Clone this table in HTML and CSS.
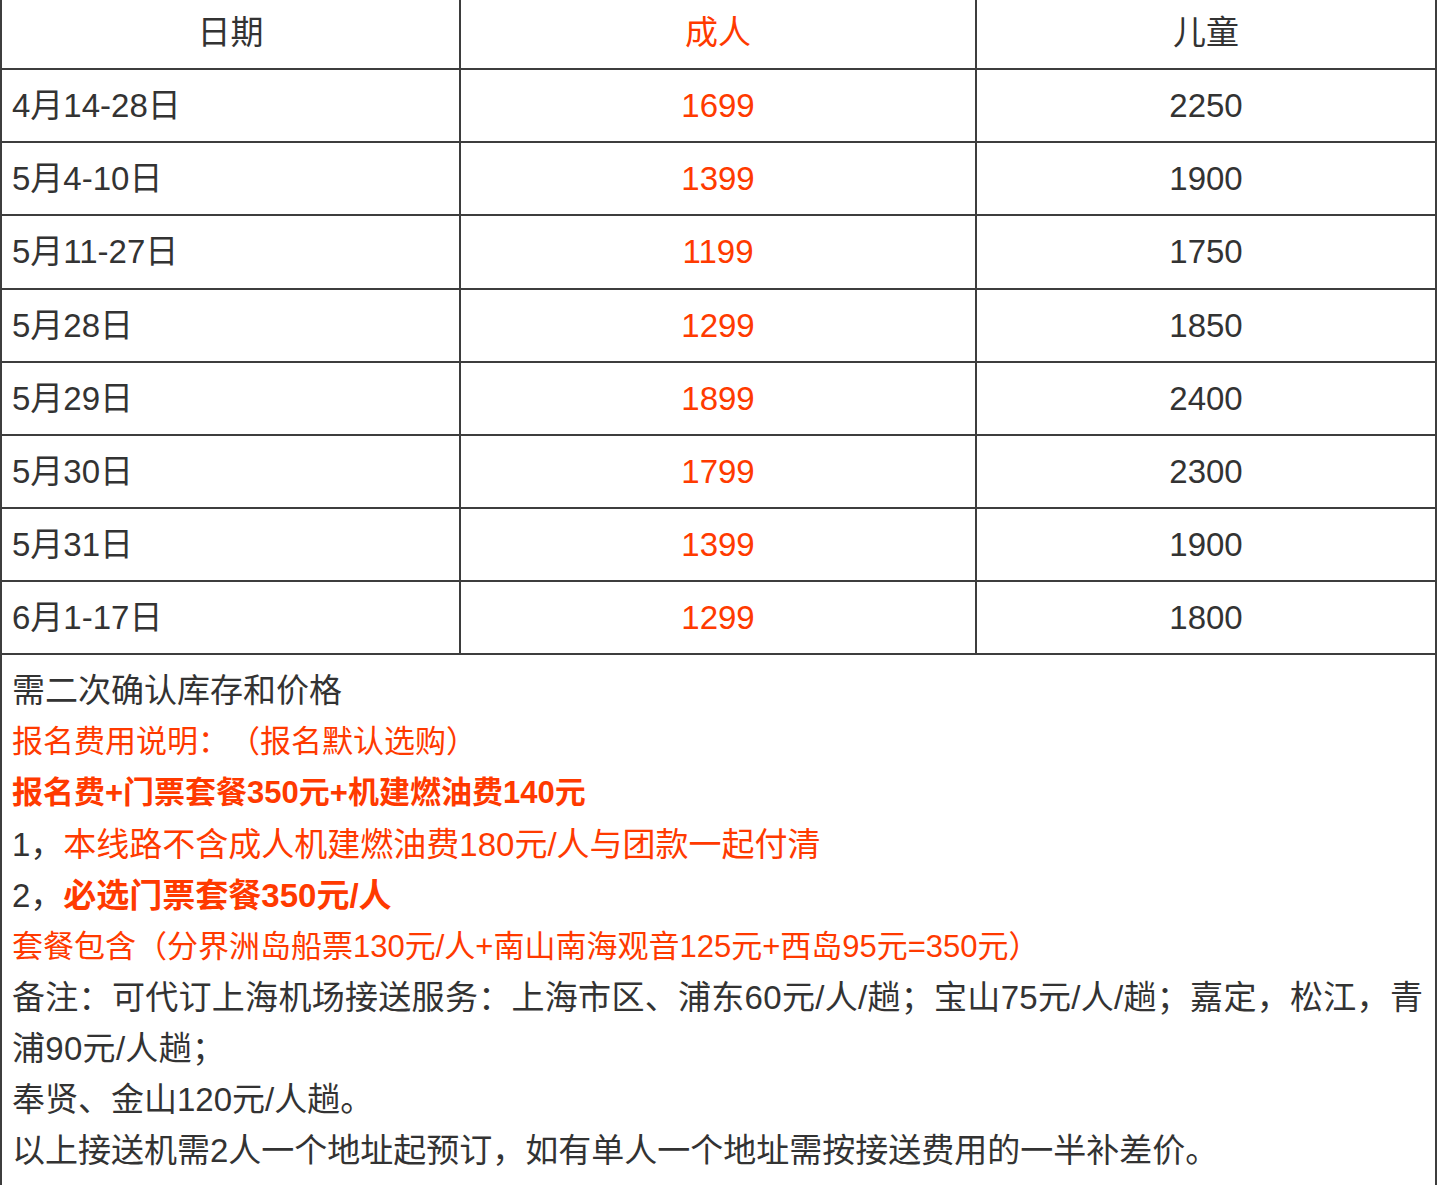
FILE: index.html
```html
<!DOCTYPE html>
<html lang="zh-CN">
<head>
<meta charset="utf-8">
<title>价格表</title>
<link rel="stylesheet" href="styles.css">
</head>
<body>
<table class="price-table">
  <colgroup>
    <col class="col-date">
    <col class="col-adult">
    <col class="col-child">
  </colgroup>
  <thead>
    <tr>
      <th>日期</th>
      <th class="red">成人</th>
      <th>儿童</th>
    </tr>
  </thead>
  <tbody>
    <tr><td class="date">4月14-28日</td><td class="num red">1699</td><td class="num">2250</td></tr>
    <tr><td class="date">5月4-10日</td><td class="num red">1399</td><td class="num">1900</td></tr>
    <tr><td class="date">5月11-27日</td><td class="num red">1199</td><td class="num">1750</td></tr>
    <tr><td class="date">5月28日</td><td class="num red">1299</td><td class="num">1850</td></tr>
    <tr><td class="date">5月29日</td><td class="num red">1899</td><td class="num">2400</td></tr>
    <tr><td class="date">5月30日</td><td class="num red">1799</td><td class="num">2300</td></tr>
    <tr><td class="date">5月31日</td><td class="num red">1399</td><td class="num">1900</td></tr>
    <tr><td class="date">6月1-17日</td><td class="num red">1299</td><td class="num">1800</td></tr>
    <tr>
      <td class="notes" colspan="3">
        <p>需二次确认库存和价格</p>
        <p class="red small">报名费用说明：（报名默认选购）</p>
        <p class="red strong small">报名费+门票套餐350元+机建燃油费140元</p>
        <p>1，<span class="red">本线路不含成人机建燃油费180元/人与团款一起付清</span></p>
        <p>2，<span class="red strong">必选门票套餐350元/人</span></p>
        <p class="red small">套餐包含（分界洲岛船票130元/人+南山南海观音125元+西岛95元=350元）</p>
        <p class="wide">备注：可代订上海机场接送服务：上海市区、浦东60元/人/趟；宝山75元/人/趟；嘉定，松江，青浦90元/人趟；</p>
        <p>奉贤、金山120元/人趟。</p>
        <p>以上接送机需2人一个地址起预订，如有单人一个地址需按接送费用的一半补差价。</p>
      </td>
    </tr>
  </tbody>
</table>
</body>
</html>
```

FILE: styles.css
```css
html, body {
  margin: 0;
  padding: 0;
  background: #ffffff;
}

body {
  font-family: "Liberation Sans", "Noto Sans CJK SC", sans-serif;
  font-size: 33px;
  line-height: 51.125px;
  color: #333333;
  overflow: hidden;
  text-spacing-trim: space-all;
}

.price-table {
  width: 1435px;
  margin-top: -5px;
  border-collapse: collapse;
  table-layout: fixed;
}

.col-date { width: 459px; }
.col-adult { width: 516px; }
.col-child { width: 460px; }

.price-table th,
.price-table td {
  border: 2px solid #3d3d3d;
  padding: 10px 10px;
  font-weight: normal;
  vertical-align: middle;
}

.price-table th {
  text-align: center;
}

.price-table td.date {
  text-align: left;
}

.price-table td.num {
  text-align: center;
}

.red {
  color: #ff3a00;
}

.strong {
  font-weight: bold;
}

.notes {
  text-align: left;
}

.notes p {
  margin: 0;
  line-height: 51.125px;
}

.notes p.small {
  font-size: 31px;
}

.notes p.wide {
  letter-spacing: 0.3px;
}
```
